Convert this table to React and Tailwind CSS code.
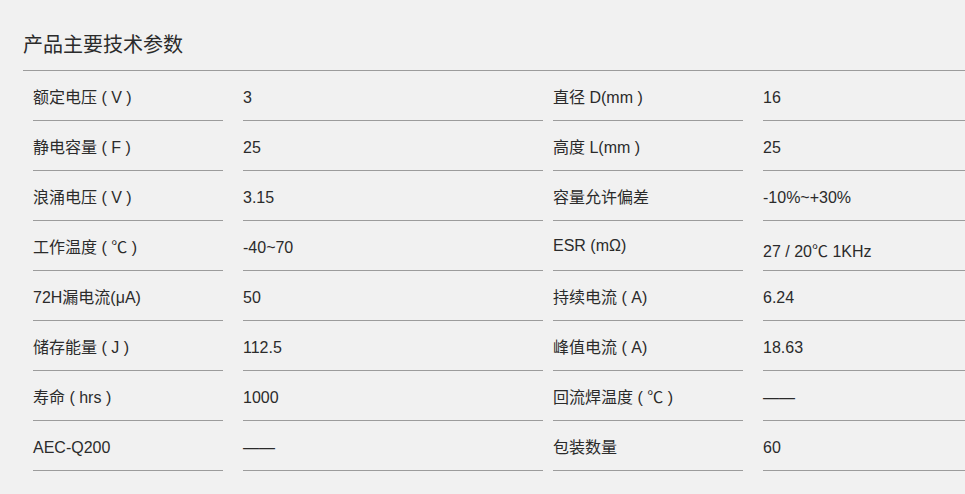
import React from "react";

const rows = [
  { l1: "额定电压 ( V )", v1: "3", l2: "直径 D(mm )", v2: "16" },
  { l1: "静电容量 ( F )", v1: "25", l2: "高度 L(mm )", v2: "25" },
  { l1: "浪涌电压 ( V )", v1: "3.15", l2: "容量允许偏差", v2: "-10%~+30%" },
  { l1: "工作温度 ( ℃ )", v1: "-40~70", l2: "ESR (mΩ)", v2: "27 / 20℃ 1KHz", esr: true },
  { l1: "72H漏电流(μA)", v1: "50", l2: "持续电流 ( A)", v2: "6.24" },
  { l1: "储存能量 ( J )", v1: "112.5", l2: "峰值电流 ( A)", v2: "18.63" },
  { l1: "寿命 ( hrs )", v1: "1000", l2: "回流焊温度 ( ℃ )", v2: "——" },
  { l1: "AEC-Q200", v1: "——", l2: "包装数量", v2: "60" },
];

const cell = "shrink-0 h-[50px] border-b border-[#9c9c9c] ml-[10px] leading-[24px]";

export default function App() {
  return (
    <div
      className="w-full h-[494px] overflow-hidden bg-[#f1f1f1] pl-[23px] text-[#2b2b2b]"
      style={{ fontFamily: '"Liberation Sans", "Noto Sans CJK SC", sans-serif' }}
    >
      <div className="pt-[30px] pb-[10px] text-[20px] leading-[30px] border-b border-[#9c9c9c]">
        产品主要技术参数
      </div>
      <div className="text-[16px]">
        {rows.map((r, i) => (
          <div key={i} className="flex">
            <div className={`${cell} w-[190px] mr-[10px] pt-[15px]`}>{r.l1}</div>
            <div className={`${cell} w-[300px] pt-[15px]`}>{r.v1}</div>
            <div className={`${cell} w-[190px] mr-[10px] ${r.esr ? "pt-[13px]" : "pt-[15px]"}`}>{r.l2}</div>
            <div className={`${cell} w-[300px] ${r.esr ? "pt-[19px]" : "pt-[15px]"}`}>{r.v2}</div>
          </div>
        ))}
      </div>
    </div>
  );
}
